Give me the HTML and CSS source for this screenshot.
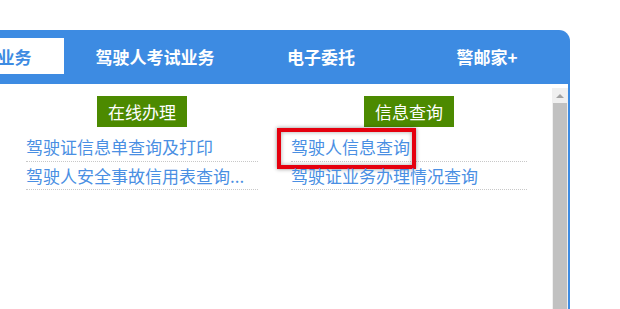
FILE: index.html
```html
<!DOCTYPE html>
<html lang="zh-CN">
<head>
<meta charset="utf-8">
<link rel="stylesheet" href="styles.css">
</head>
<body>
<div class="panel">
  <div class="tabs">
    <div class="tab active">驾驶证业务</div>
    <div class="tab">驾驶人考试业务</div>
    <div class="tab">电子委托</div>
    <div class="tab">警邮家+</div>
  </div>
  <div class="body">
    <div class="content">
      <div class="column">
        <div class="btn">在线办理</div>
        <ul class="links">
          <li><a>驾驶证信息单查询及打印</a></li>
          <li><a>驾驶人安全事故信用表查询...</a></li>
        </ul>
      </div>
      <div class="column">
        <div class="btn">信息查询</div>
        <ul class="links">
          <li class="marked"><a>驾驶人信息查询</a><span class="mark"></span></li>
          <li><a>驾驶证业务办理情况查询</a></li>
        </ul>
      </div>
    </div>
    <div class="scrollbar">
      <div class="arrow"><span class="tri"></span></div>
      <div class="thumb"></div>
    </div>
  </div>
</div>
</body>
</html>
```

FILE: styles.css
```css
html, body {
  margin: 0;
  padding: 0;
  background: #fff;
  overflow: hidden;
}
body {
  font-family: "Noto Sans CJK SC", "Noto Sans", sans-serif;
  height: 309px;
}
.panel {
  margin-top: 30px;
  margin-left: -94px;
  width: 664px;
}
.tabs {
  display: flex;
  align-items: flex-start;
  height: 54px;
  padding-top: 8px;
  box-sizing: border-box;
  background: #3d8be2;
  border-top-right-radius: 11px;
}
.tab {
  width: 166px;
  height: 36px;
  display: flex;
  align-items: center;
  justify-content: center;
  color: #fff;
  font-weight: bold;
  font-size: 17px;
  letter-spacing: 0;
}
.tab.active {
  width: 150px;
  margin: 0 8px;
  background: #fff;
  color: #3d8be2;
}
.body {
  display: flex;
  height: 240px;
  border-right: 2px solid #3d8be2;
}
.content {
  flex: 1;
  display: grid;
  grid-template-columns: 232px 236px;
  column-gap: 33px;
  padding-left: 120px;
  padding-top: 12px;
  align-content: start;
}
.column {
  display: flex;
  flex-direction: column;
  align-items: center;
}
.btn {
  width: 90px;
  height: 31px;
  background: #4c8a00;
  color: #fff;
  font-size: 17px;
  display: flex;
  align-items: center;
  justify-content: center;
}
.links {
  list-style: none;
  margin: 6px 0 0;
  padding: 0;
  width: 100%;
}
.links li {
  position: relative;
  height: 28.5px;
  line-height: 27px;
  border-bottom: 1px dotted #c8c8c8;
  box-sizing: border-box;
  font-size: 17px;
  white-space: nowrap;
}
.links a {
  color: #4a8fe3;
  text-decoration: none;
}
.mark {
  position: absolute;
  left: -14px;
  top: -5px;
  width: 139px;
  height: 41px;
  box-sizing: border-box;
  border: 4px solid #e5000e;
  box-shadow: 0 0 4px rgba(0,0,0,0.45), inset 0 0 4px rgba(0,0,0,0.35);
}
.scrollbar {
  width: 16px;
  margin-top: 4px;
  background: #f0f0f0;
  display: flex;
  flex-direction: column;
}
.arrow {
  height: 15px;
  display: flex;
  align-items: center;
  justify-content: center;
}
.tri {
  width: 0;
  height: 0;
  border-left: 4px solid transparent;
  border-right: 4px solid transparent;
  border-bottom: 4px solid #a3a3a3;
}
.thumb {
  flex: 1;
  margin: 0 1px;
  background: #c1c1c1;
}
```
